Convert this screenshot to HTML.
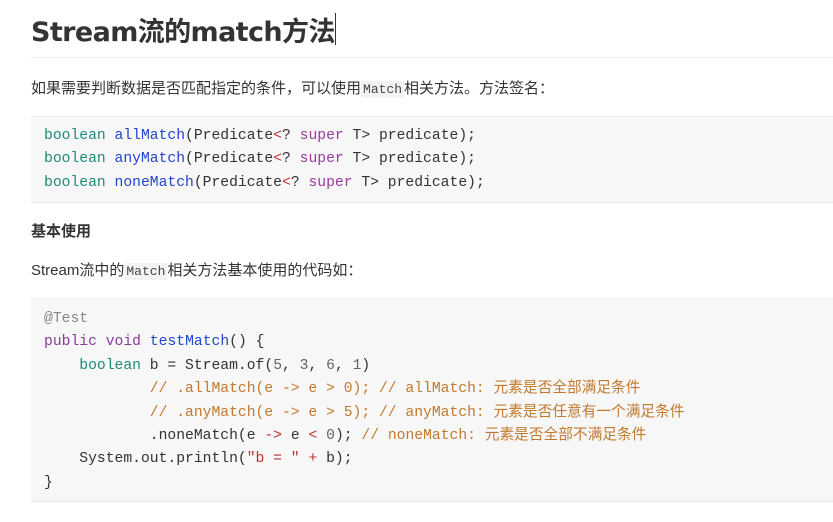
<!DOCTYPE html>
<html><head><meta charset="utf-8"><style>
html,body{margin:0;padding:0;background:#fff;width:833px;height:522px;overflow:hidden}
body{font-family:"Liberation Sans","Noto Sans CJK SC",sans-serif;color:#333;position:relative}
.a{position:absolute;white-space:pre}
h1{position:absolute;left:31px;top:13px;margin:0;font-size:27px;font-weight:bold;color:#333;line-height:40px;font-family:"DejaVu Sans","Noto Sans CJK SC",sans-serif;letter-spacing:-0.6px}
.rule{position:absolute;left:31px;right:0;top:57px;height:1px;background:#eee}
.p{font-size:15px;color:#333}
.ic{font-family:"Liberation Mono",monospace;font-size:13px;background:#f3f3f3;padding:1px 2px;color:#444}
.cb{position:absolute;left:31px;right:0;background:#f7f7f7;border-top:1px solid #eee;border-bottom:1px solid #eaeaea}
.code{font-family:"Liberation Mono","Noto Sans CJK SC",monospace;font-size:14.7px;line-height:23.4px;color:#333;white-space:pre;position:absolute;left:13px}
.k{color:#1b8a7a}.f{color:#2244cc}.s{color:#9a3aa3}.c{color:#c07a30}.g{color:#888}.r{color:#c03030}.n{color:#666}.v{color:#8a3b9a}
</style></head><body>
<h1>Stream流的match方法<span style="display:inline-block;width:1px;height:32px;background:#333;vertical-align:-4px"></span></h1>
<div class="rule"></div>
<div class="a p" style="left:31px;top:77px">如果需要判断数据是否匹配指定的条件，可以使用<span class="ic">Match</span>相关方法。方法签名：</div>
<div class="cb" style="top:116px;height:85px">
<div class="code" style="top:8px"><span class="k">boolean</span> <span class="f">allMatch</span>(Predicate<span class="r">&lt;</span>? <span class="s">super</span> T&gt; predicate);
<span class="k">boolean</span> <span class="f">anyMatch</span>(Predicate<span class="r">&lt;</span>? <span class="s">super</span> T&gt; predicate);
<span class="k">boolean</span> <span class="f">noneMatch</span>(Predicate<span class="r">&lt;</span>? <span class="s">super</span> T&gt; predicate);</div>
</div>
<div class="a" style="left:31px;top:220px;font-size:15px;font-weight:bold;color:#333">基本使用</div>
<div class="a p" style="left:31px;top:259px">Stream流中的<span class="ic">Match</span>相关方法基本使用的代码如：</div>
<div class="cb" style="top:298px;height:202px">
<div class="code" style="top:9px"><span class="g">@Test</span>
<span class="v">public</span> <span class="v">void</span> <span class="f">testMatch</span>() {
    <span class="k">boolean</span> b = Stream.of(<span class="n">5</span>, <span class="n">3</span>, <span class="n">6</span>, <span class="n">1</span>)
            <span class="c">// .allMatch(e -&gt; e &gt; 0); // allMatch: 元素是否全部满足条件</span>
            <span class="c">// .anyMatch(e -&gt; e &gt; 5); // anyMatch: 元素是否任意有一个满足条件</span>
            .noneMatch(e <span class="r">-&gt;</span> e <span class="r">&lt;</span> <span class="n">0</span>); <span class="c">// noneMatch: 元素是否全部不满足条件</span>
    System.out.println(<span class="r">"b = "</span> <span class="r">+</span> b);
}</div>
</div>
</body></html>
